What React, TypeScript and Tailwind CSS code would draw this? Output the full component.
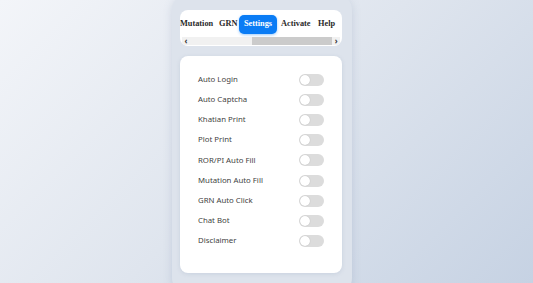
import React from "react";

const rows = [
  "Auto Login",
  "Auto Captcha",
  "Khatian Print",
  "Plot Print",
  "ROR/PI Auto Fill",
  "Mutation Auto Fill",
  "GRN Auto Click",
  "Chat Bot",
  "Disclaimer",
];

function Toggle() {
  return (
    <div className="relative h-[12px] w-[25px] rounded-full bg-[#dcdcdc]">
      <div className="absolute left-[1px] top-[1px] h-[10px] w-[10px] rounded-full bg-white shadow-[0_0_1px_rgba(0,0,0,0.25)]" />
    </div>
  );
}

export default function App() {
  return (
    <div className="flex h-[283px] w-[533px] justify-center overflow-hidden bg-[linear-gradient(135deg,#f3f5f9_0%,#dfe5ee_50%,#c6d2e3_100%)]">
      <div className="ml-[-9px] mt-[-6px] h-[300px] w-[180px] rounded-2xl bg-[#dde3ec] pl-[8px] pr-[10px] pt-[16px] shadow-[0_2px_8px_rgba(120,140,170,0.25)]">
        <div className="h-[36px] overflow-hidden rounded-lg bg-white">
          <div
            className="flex h-[27px] items-center whitespace-nowrap pt-[1px] text-[8.3px] font-bold text-[#2a2a2a]"
            style={{ fontFamily: '"Liberation Serif", serif' }}
          >
            <span className="w-[32px]">Mutation</span>
            <span className="ml-[7px] w-[17px]">GRN</span>
            <span className="ml-[3px] flex h-[19px] w-[38px] items-center justify-center rounded-[5px] bg-[#0a7cf5] text-white shadow-[0_1px_3px_rgba(10,124,245,0.4)]">
              Settings
            </span>
            <span className="ml-[4px] w-[28px]">Activate</span>
            <span className="ml-[9px]">Help</span>
          </div>
          <div className="mx-[2px] flex h-[8px] items-center bg-[#f1f1f1] text-[8px] font-bold leading-none text-[#333]">
            <span className="w-[8px] text-center">‹</span>
            <div className="ml-[62px] h-full w-[82px] bg-[#cbcbcb]" />
            <span className="w-[8px] text-center">›</span>
          </div>
        </div>
        <div className="mt-[10px] flex h-[217px] flex-col rounded-lg bg-white pl-[18px] pr-[18px] pt-[14px] shadow-[0_1px_4px_rgba(120,140,170,0.2)]">
          {rows.map((r) => (
            <div key={r} className="flex h-[20.1px] items-center justify-between">
              <span
                className="text-[7.8px] text-[#3f3f3f] [font-variant-ligatures:none]"
                style={{ fontFamily: '"Noto Sans", sans-serif' }}
              >
                {r}
              </span>
              <Toggle />
            </div>
          ))}
        </div>
      </div>
    </div>
  );
}
